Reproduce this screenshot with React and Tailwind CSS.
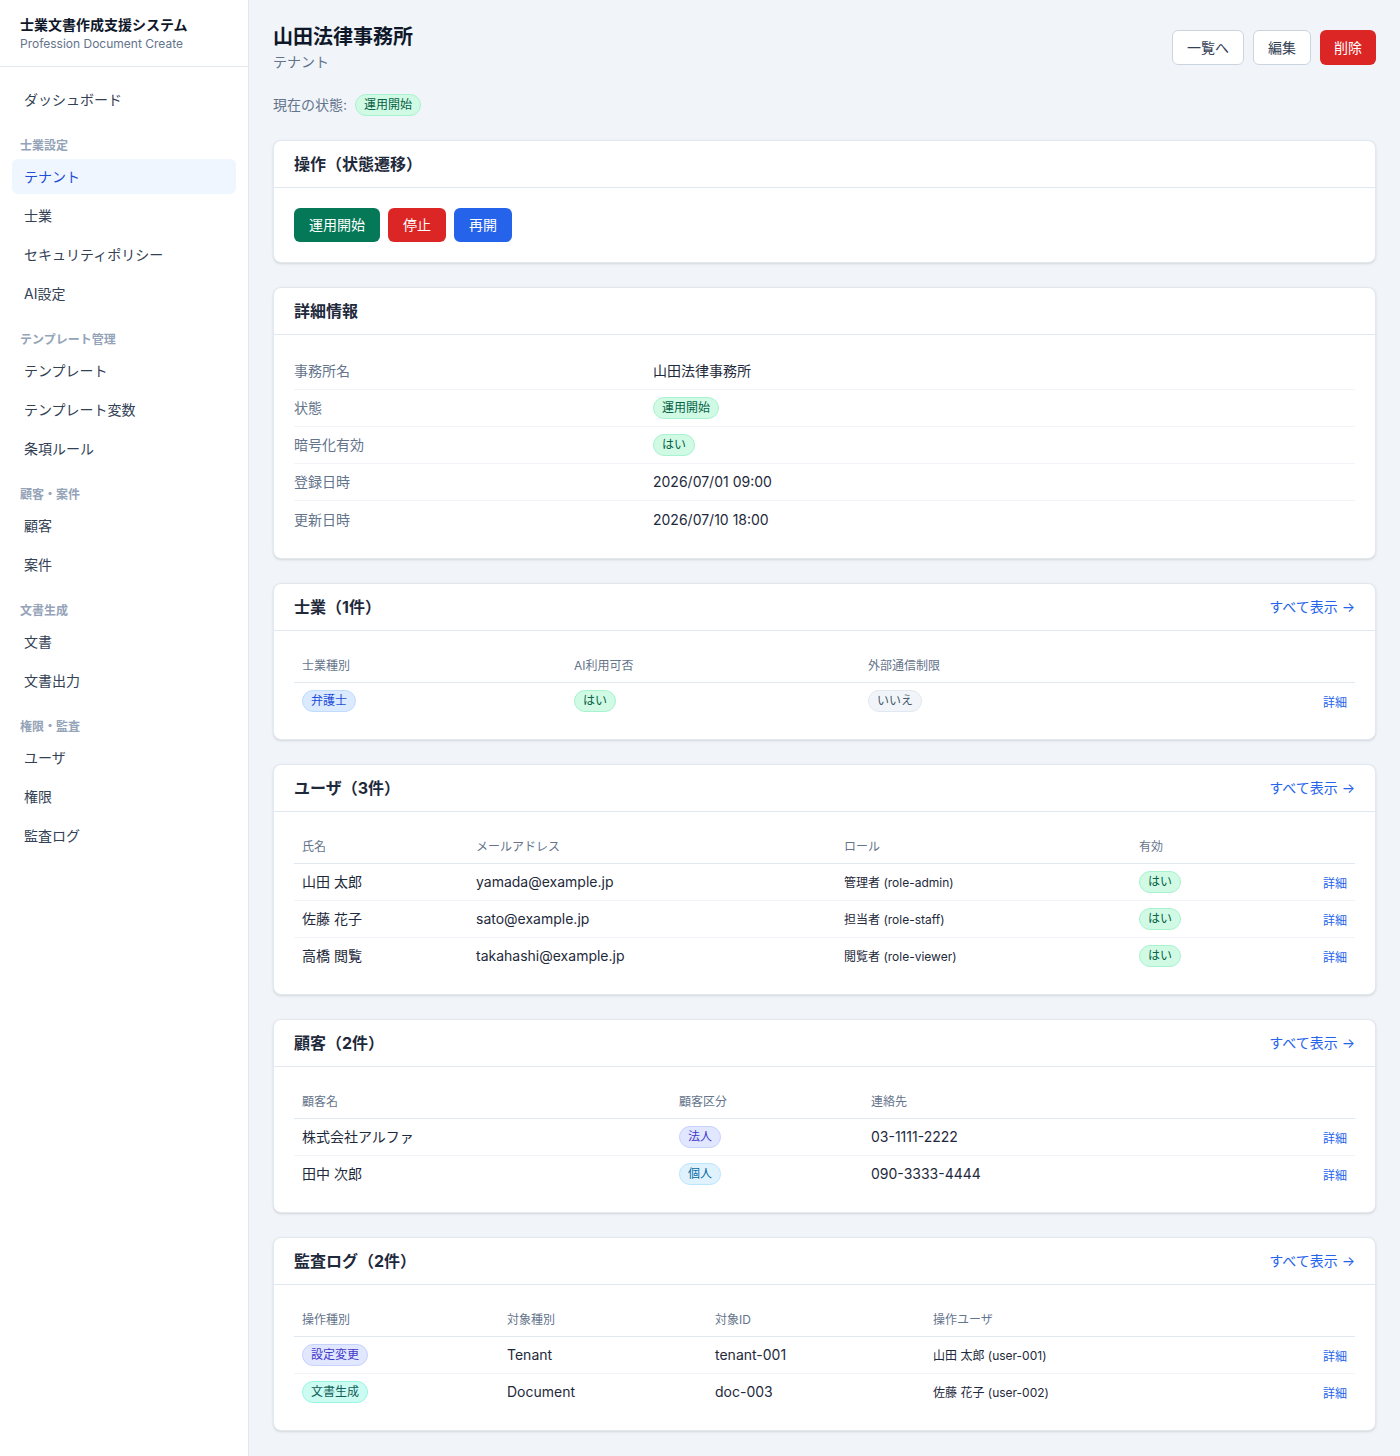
import React from "react";

const navGroups = [
  { items: ["ダッシュボード"] },
  { label: "士業設定", items: ["テナント", "士業", "セキュリティポリシー", "AI設定"] },
  { label: "テンプレート管理", items: ["テンプレート", "テンプレート変数", "条項ルール"] },
  { label: "顧客・案件", items: ["顧客", "案件"] },
  { label: "文書生成", items: ["文書", "文書出力"] },
  { label: "権限・監査", items: ["ユーザ", "権限", "監査ログ"] },
];

const badgeColors = {
  green: "bg-[#d1fae5] border-[#a7f3d0] text-[#065f46]",
  blue: "bg-[#dbeafe] border-[#bfdbfe] text-[#1d4ed8]",
  gray: "bg-[#f1f5f9] border-[#e2e8f0] text-[#475569]",
  indigo: "bg-[#e0e7ff] border-[#c7d2fe] text-[#4338ca]",
  sky: "bg-[#e0f2fe] border-[#bae6fd] text-[#0369a1]",
  teal: "bg-[#ccfbf1] border-[#99f6e4] text-[#115e59]",
};

const Badge = ({ color = "green", children }) => (
  <span className={`inline-flex items-center h-[22px] px-2 rounded-full border text-xs ${badgeColors[color]}`}>
    {children}
  </span>
);

const Card = ({ title, link, children }) => (
  <section className="bg-white border border-[#e2e8f0] rounded-lg shadow-sm">
    <div className="flex items-center justify-between px-5 h-[47px] border-b border-[#e2e8f0]">
      <h2 className="text-base font-bold text-[#1e293b]">{title}</h2>
      {link && <a className="text-sm text-[#2563eb]">すべて表示 →</a>}
    </div>
    {children}
  </section>
);

const Detail = () => <span className="text-xs text-[#2563eb]">詳細</span>;

const DataTable = ({ cols, rows }) => (
  <div className="px-5 py-5">
    <table className="w-full table-fixed border-collapse">
      <thead>
        <tr className="border-b border-[#e2e8f0]">
          {cols.map((c, i) => (
            <th key={i} className={`px-2 h-[31px] text-left text-xs font-normal text-[#64748b] ${c.w}`}>
              {c.label}
            </th>
          ))}
          <th className="px-2 h-[31px]"></th>
        </tr>
      </thead>
      <tbody>
        {rows.map((r, i) => (
          <tr key={i} className={i < rows.length - 1 ? "border-b border-[#f1f5f9]" : ""}>
            {r.map((cell, j) => (
              <td key={j} className="px-2 h-[37px] text-sm text-[#1e293b]">
                {cell}
              </td>
            ))}
            <td className="px-2 h-[37px] text-right">
              <Detail />
            </td>
          </tr>
        ))}
      </tbody>
    </table>
  </div>
);

const Small = ({ children }) => <span className="text-xs text-[#1e293b]">{children}</span>;

export default function App() {
  return (
    <div
      className="flex min-h-screen bg-[#f1f5f9] text-[#1e293b]"
      style={{ fontFamily: 'Inter, "Noto Sans CJK JP", sans-serif' }}
    >
      {/* Sidebar */}
      <aside className="w-[249px] shrink-0 bg-white border-r border-[#e2e8f0]">
        <div className="px-5 pt-[15px] h-[67px] border-b border-[#e2e8f0]">
          <div className="text-sm font-bold text-[#0f172a] leading-5">士業文書作成支援システム</div>
          <div className="text-xs text-[#64748b] leading-4 mt-[1px]">Profession Document Create</div>
        </div>
        <nav className="px-3 pt-[15px]">
          {navGroups.map((g, gi) => (
            <div key={gi}>
              {g.label && (
                <div className="px-2 mt-[21px] mb-[5px] text-xs font-semibold text-[#94a3b8] leading-4">{g.label}</div>
              )}
              {g.items.map((it) => (
                <div
                  key={it}
                  className={`flex items-center h-[35px] mb-1 px-3 rounded-md text-sm ${
                    it === "テナント" ? "bg-[#eff6ff] text-[#1d4ed8]" : "text-[#334155]"
                  }`}
                >
                  {it}
                </div>
              ))}
            </div>
          ))}
        </nav>
      </aside>

      {/* Main */}
      <main className="flex-1 px-6 pt-[23px] pb-6">
        <div className="flex items-start justify-between">
          <div>
            <h1 className="text-xl font-bold text-[#0f172a] leading-7">山田法律事務所</h1>
            <div className="text-sm text-[#64748b] mt-[1px]">テナント</div>
          </div>
          <div className="flex gap-[9px] mt-[7px]">
            <button className="h-[35px] px-[14px] bg-white border border-[#cbd5e1] rounded-md text-sm text-[#334155]">一覧へ</button>
            <button className="h-[35px] px-[14px] bg-white border border-[#cbd5e1] rounded-md text-sm text-[#334155]">編集</button>
            <button className="h-[35px] px-[14px] bg-[#dc2626] rounded-md text-sm text-white">削除</button>
          </div>
        </div>

        <div className="flex items-center gap-2 mt-[22px] text-sm text-[#64748b]">
          現在の状態: <Badge>運用開始</Badge>
        </div>

        <div className="flex flex-col gap-6 mt-[24px]">
          <Card title="操作（状態遷移）">
            <div className="flex gap-2 p-5">
              <button className="h-[34px] px-[15px] bg-[#047857] rounded-md text-sm text-white">運用開始</button>
              <button className="h-[34px] px-[15px] bg-[#dc2626] rounded-md text-sm text-white">停止</button>
              <button className="h-[34px] px-[15px] bg-[#2563eb] rounded-md text-sm text-white">再開</button>
            </div>
          </Card>

          <Card title="詳細情報">
            <dl className="px-5 pt-[18px] pb-5 text-sm">
              {[
                ["事務所名", "山田法律事務所"],
                ["状態", <Badge>運用開始</Badge>],
                ["暗号化有効", <Badge>はい</Badge>],
                ["登録日時", "2026/07/01 09:00"],
                ["更新日時", "2026/07/10 18:00"],
              ].map(([k, v], i, arr) => (
                <div
                  key={k}
                  className={`grid grid-cols-[359px_1fr] items-center h-[37px] ${i < arr.length - 1 ? "border-b border-[#f1f5f9]" : ""}`}
                >
                  <dt className="text-[#64748b]">{k}</dt>
                  <dd className="text-[#1e293b]">{v}</dd>
                </div>
              ))}
            </dl>
          </Card>

          <Card title="士業（1件）" link>
            <DataTable
              cols={[
                { label: "士業種別", w: "w-[272px]" },
                { label: "AI利用可否", w: "w-[294px]" },
                { label: "外部通信制限", w: "w-[400px]" },
              ]}
              rows={[[<Badge color="blue">弁護士</Badge>, <Badge>はい</Badge>, <Badge color="gray">いいえ</Badge>]]}
            />
          </Card>

          <Card title="ユーザ（3件）" link>
            <DataTable
              cols={[
                { label: "氏名", w: "w-[174px]" },
                { label: "メールアドレス", w: "w-[368px]" },
                { label: "ロール", w: "w-[295px]" },
                { label: "有効", w: "w-[120px]" },
              ]}
              rows={[
                ["山田 太郎", "yamada@example.jp", <Small>管理者 (role-admin)</Small>, <Badge>はい</Badge>],
                ["佐藤 花子", "sato@example.jp", <Small>担当者 (role-staff)</Small>, <Badge>はい</Badge>],
                ["高橋 閲覧", "takahashi@example.jp", <Small>閲覧者 (role-viewer)</Small>, <Badge>はい</Badge>],
              ]}
            />
          </Card>

          <Card title="顧客（2件）" link>
            <DataTable
              cols={[
                { label: "顧客名", w: "w-[377px]" },
                { label: "顧客区分", w: "w-[192px]" },
                { label: "連絡先", w: "w-[400px]" },
              ]}
              rows={[
                ["株式会社アルファ", <Badge color="indigo">法人</Badge>, "03-1111-2222"],
                ["田中 次郎", <Badge color="sky">個人</Badge>, "090-3333-4444"],
              ]}
            />
          </Card>

          <Card title="監査ログ（2件）" link>
            <DataTable
              cols={[
                { label: "操作種別", w: "w-[205px]" },
                { label: "対象種別", w: "w-[208px]" },
                { label: "対象ID", w: "w-[218px]" },
                { label: "操作ユーザ", w: "w-[340px]" },
              ]}
              rows={[
                [<Badge color="indigo">設定変更</Badge>, "Tenant", "tenant-001", <Small>山田 太郎 (user-001)</Small>],
                [<Badge color="teal">文書生成</Badge>, "Document", "doc-003", <Small>佐藤 花子 (user-002)</Small>],
              ]}
            />
          </Card>
        </div>
      </main>
    </div>
  );
}
